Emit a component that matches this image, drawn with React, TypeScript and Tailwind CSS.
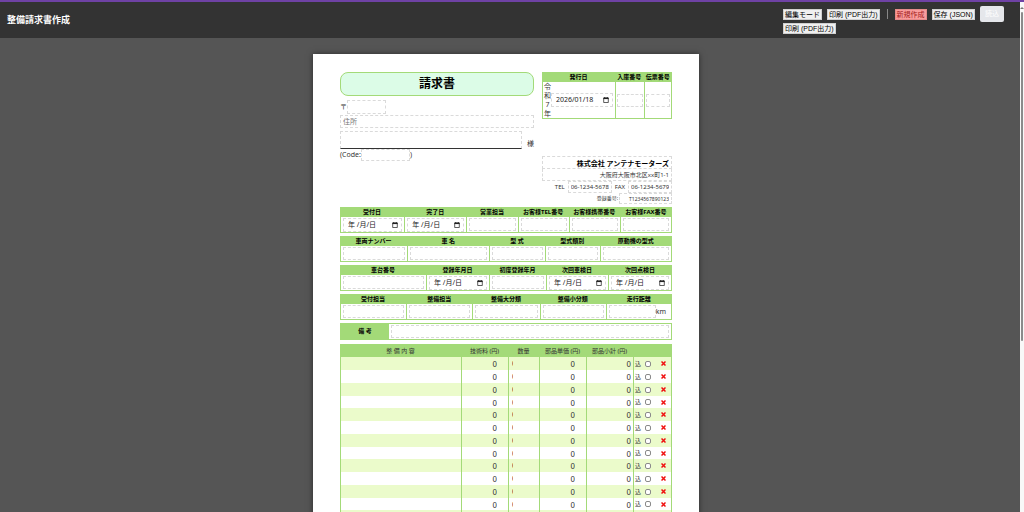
import React from "react";

type Field = {
  label: string;
  width: number;
  kind?: "date" | "text";
  suffix?: string;
};

const groups: Field[][] = [
  [
    { label: "受付日", width: 64, kind: "date" },
    { label: "完了日", width: 62, kind: "date" },
    { label: "営業担当", width: 51 },
    { label: "お客様TEL番号", width: 51 },
    { label: "お客様携帯番号", width: 51 },
    { label: "お客様FAX番号", width: 52 },
  ],
  [
    { label: "車両ナンバー", width: 67 },
    { label: "車 名", width: 82 },
    { label: "型 式", width: 55 },
    { label: "型式類別", width: 55 },
    { label: "原動機の型式", width: 72 },
  ],
  [
    { label: "車台番号", width: 86 },
    { label: "登録年月日", width: 63, kind: "date" },
    { label: "初度登録年月", width: 57 },
    { label: "次回車検日", width: 62, kind: "date" },
    { label: "次回点検日", width: 64, kind: "date" },
  ],
  [
    { label: "受付担当", width: 66 },
    { label: "整備担当", width: 66 },
    { label: "整備大分類", width: 67 },
    { label: "整備小分類", width: 66 },
    { label: "走行距離", width: 66, suffix: "km" },
  ],
];

const itemColumns = [
  { label: "整 備 内 容", width: 121 },
  { label: "技術料 (円)", width: 47 },
  { label: "数量", width: 31 },
  { label: "部品単価 (円)", width: 47 },
  { label: "部品小計 (円)", width: 47 },
  { label: "", width: 39 },
];

const rows = Array.from({ length: 13 }, (_, i) => i);

const dashed = "border border-dashed border-[#dadada] bg-transparent outline-none";

function CalendarIcon() {
  return (
    <svg viewBox="0 0 12 13" className="h-[6px] w-[6px] shrink-0" aria-hidden="true">
      <path d="M1 2h10v10H1z" fill="none" stroke="#222" strokeWidth="1.6" />
      <path d="M0.5 1.5h11v3h-11z" fill="#222" />
      <path d="M3 0v2M9 0v2" stroke="#222" strokeWidth="1.6" />
    </svg>
  );
}

function DateField({ label, value }: { label: string; value?: string }) {
  return (
    <div className={`flex h-[14px] w-full items-center pr-[3px] pl-[4px] ${dashed}`}>
      <input
        aria-label={label}
        defaultValue={value}
        placeholder="年 /月/日"
        className="w-0 min-w-0 flex-1 bg-transparent text-[7px] leading-[10px] text-[#222] outline-none placeholder:text-[#222]"
      />
      <CalendarIcon />
    </div>
  );
}

function ToolButton({ children, danger }: { children: React.ReactNode; danger?: boolean }) {
  return (
    <button
      type="button"
      className={
        "h-[11px] border px-px font-['Liberation_Sans','Noto_Sans_CJK_JP',sans-serif] text-[7px] leading-[9px] whitespace-nowrap " +
        (danger ? "border-[#e58a8a] bg-[#f99c9c] text-[#a32020]" : "border-[#d0d0d0] bg-[#f0f0f0] text-black")
      }
    >
      {children}
    </button>
  );
}

function FieldGroup({ fields }: { fields: Field[] }) {
  const total = fields.reduce((sum, f) => sum + f.width, 0);
  return (
    <table className="w-full table-fixed border-separate border-spacing-0">
      <colgroup>
        {fields.map((f) => (
          <col key={f.label} style={{ width: `${(f.width / total) * 100}%` }} />
        ))}
      </colgroup>
      <thead>
        <tr>
          {fields.map((f) => (
            <th key={f.label} className="h-[10px] bg-[#a3da78] p-0 text-[6px] leading-[10px] font-bold whitespace-nowrap">
              {f.label}
            </th>
          ))}
        </tr>
      </thead>
      <tbody>
        <tr>
          {fields.map((f) => (
            <td key={f.label} className="h-[16px] border-b border-l border-[#a3da78] px-[2px] py-0 align-middle last:border-r">
              {f.kind === "date" ? (
                <DateField label={f.label} />
              ) : (
                <div className="flex items-center">
                  <input aria-label={f.label} className={`h-[13px] w-0 min-w-0 flex-1 px-[2px] text-[7px] ${dashed}`} />
                  {f.suffix && <span className="pr-[3px] text-[7px] leading-[10px] text-[#333]">{f.suffix}</span>}
                </div>
              )}
            </td>
          ))}
        </tr>
      </tbody>
    </table>
  );
}

function Toolbar() {
  return (
    <header className="flex h-[36px] shrink-0 items-center justify-between bg-[#333] px-[7px]">
      <h1 className="text-[9px] leading-[12px] font-bold text-white">整備請求書作成</h1>
      <div className="flex w-[230px] flex-wrap items-center gap-x-[5px] gap-y-px">
        <ToolButton>編集モード</ToolButton>
        <ToolButton>印刷 (PDF出力)</ToolButton>
        <span className="mx-[2px] h-[10px] w-px bg-[#888]" />
        <ToolButton danger>新規作成</ToolButton>
        <ToolButton>保存 (JSON)</ToolButton>
        <button type="button" className="h-[16px] rounded-[2px] bg-[#e5e7eb] px-[5px] text-[7px] leading-[10px] text-white">
          読込
        </button>
        <ToolButton>印刷 (PDF出力)</ToolButton>
      </div>
    </header>
  );
}

function Customer() {
  return (
    <div className="min-w-0 flex-1 text-[7px] leading-[10px] text-[#333]">
      <h2 className="flex h-[24px] items-center justify-center rounded-[8px] border border-[#a3da78] bg-[#dcfce7] text-[12px] leading-[16px] font-bold text-black">
        請求書
      </h2>
      <label className="mt-[4px] flex items-center">
        〒
        <input className={`h-[14px] w-[39px] px-[2px] ${dashed}`} />
      </label>
      <input aria-label="住所" placeholder="住所" className={`mt-px block h-[13px] w-full px-[2px] placeholder:text-[#757575] ${dashed}`} />
      <label className="mt-[3px] flex items-end gap-[5px]">
        <input className={`h-[18px] min-w-0 flex-1 border-b-[#333] px-[2px] [border-bottom-style:solid] ${dashed}`} />
        様
      </label>
      <label className="flex items-center">
        <span>(Code:</span>
        <input className={`h-[12px] w-[49px] px-[2px] ${dashed}`} />)
      </label>
    </div>
  );
}

function Issuer() {
  const head = "h-[10px] bg-[#a3da78] p-0 text-[6px] leading-[10px] font-bold whitespace-nowrap";
  const cell = "h-[37px] border-b border-l border-[#a3da78] py-0 last:border-r";
  return (
    <div className="w-[130px] shrink-0 text-[#333]">
      <table className="w-full table-fixed border-separate border-spacing-0 text-black">
        <thead>
          <tr>
            <th className={`w-[73px] ${head}`}>発行日</th>
            <th className={head}>入庫番号</th>
            <th className={head}>伝票番号</th>
          </tr>
        </thead>
        <tbody>
          <tr>
            <td className={`pr-[2px] pl-px ${cell}`}>
              <div className="flex items-center">
                <span className="w-[7px] shrink-0 text-center text-[7px] leading-[9px] break-all text-[#333]">令和7年</span>
                <DateField label="発行日" value="2026/01/18" />
              </div>
            </td>
            <td className={`px-px ${cell}`}>
              <input aria-label="入庫番号" className={`block h-[13px] w-full ${dashed}`} />
            </td>
            <td className={`px-px ${cell}`}>
              <input aria-label="伝票番号" className={`block h-[13px] w-full ${dashed}`} />
            </td>
          </tr>
        </tbody>
      </table>
      <div className="mt-[37px] text-[6px] leading-[9px]">
        <input aria-label="会社名" defaultValue="株式会社 アンテナモーターズ" className={`block h-[13px] w-full px-[2px] text-right text-[7px] font-bold text-black ${dashed}`} />
        <input aria-label="会社住所" defaultValue="大阪府大阪市北区xx町1-1" className={`block h-[12px] w-full border-t-0 px-[2px] text-right ${dashed}`} />
        <div className="flex items-center justify-end gap-[3px]">
          <label className="flex items-center gap-[3px]">
            TEL
            <input defaultValue="06-1234-5678" className={`h-[12px] w-[44px] px-[2px] text-right ${dashed}`} />
          </label>
          <label className="flex items-center gap-[3px]">
            FAX
            <input defaultValue="06-1234-5679" className={`h-[12px] w-[44px] px-[2px] text-right ${dashed}`} />
          </label>
        </div>
        <label className="flex items-center justify-end gap-px text-[5px]">
          登録番号:
          <input defaultValue="T1234567890123" className={`h-[11px] w-[53px] px-[2px] text-right ${dashed}`} />
        </label>
      </div>
    </div>
  );
}

function Items() {
  const total = itemColumns.reduce((sum, c) => sum + c.width, 0);
  const cell = "border-l border-[#a3da78] p-0 align-middle";
  const num =
    "block w-full bg-transparent text-right font-['Noto_Sans_CJK_JP',sans-serif] text-[8px] leading-[11px] h-[11px] outline-none";
  return (
    <table className="mt-[4px] w-full table-fixed border-separate border-spacing-0 text-[#333]">
      <colgroup>
        {itemColumns.map((c, i) => (
          <col key={i} style={{ width: `${(c.width / total) * 100}%` }} />
        ))}
      </colgroup>
      <thead>
        <tr>
          {itemColumns.map((c, i) => (
            <th key={i} className="h-[13px] bg-[#a3da78] p-0 text-[6px] leading-[12px] font-normal whitespace-nowrap">
              {c.label}
            </th>
          ))}
        </tr>
      </thead>
      <tbody>
        {rows.map((r) => (
          <tr key={r} className="h-[13px] odd:bg-[#ebfbcb] nth-[4n]:h-[12px]">
            <td className={cell}>
              <input aria-label="整備内容" className="block h-[11px] w-full bg-transparent px-[2px] text-[7px] outline-none" />
            </td>
            <td className={cell}>
              <input aria-label="技術料" defaultValue="0" className={`pr-[11px] ${num}`} />
            </td>
            <td className={cell}>
              <input aria-label="数量" defaultValue="0" className="ml-[3px] block h-[11px] w-px bg-transparent text-[7px] leading-[11px] text-[#5c1a1a] outline-none" />
            </td>
            <td className={cell}>
              <input aria-label="部品単価" defaultValue="0" className={`pr-[11px] ${num}`} />
            </td>
            <td className={cell}>
              <input aria-label="部品小計" defaultValue="0" className={`pr-[2px] ${num}`} />
            </td>
            <td className={`border-r ${cell}`}>
              <div className="flex items-center justify-between pr-[4px] pl-px">
                <label className="flex items-center gap-[4px] text-[6px] leading-[10px]">
                  込
                  <input type="checkbox" className="h-[6px] w-[6px] appearance-none rounded-[2px] border border-[#8a8a8a] bg-white" />
                </label>
                <button type="button" aria-label="行を削除" className="flex h-[10px] w-[7px] items-center justify-center">
                  <svg viewBox="0 0 10 10" className="h-[5px] w-[5px]" aria-hidden="true">
                    <path d="M1 1l8 8M9 1l-8 8" stroke="#f01010" strokeWidth="3" />
                  </svg>
                </button>
              </div>
            </td>
          </tr>
        ))}
      </tbody>
    </table>
  );
}

export default function App() {
  return (
    <div className="flex h-screen flex-col overflow-hidden border-t-2 border-[#6f42a5] bg-[#555] font-['Noto_Sans','Noto_Sans_CJK_JP',sans-serif]">
      <div className="flex min-h-0 flex-1">
        <div className="flex min-w-0 flex-1 flex-col">
          <Toolbar />
          <div className="min-h-0 flex-1 overflow-hidden pt-[16px] pr-[8px]">
            <main className="mx-auto w-[386px] bg-white px-[27px] pt-[18px] pb-[27px] text-black shadow-[0_0_6px_rgba(0,0,0,0.5)]">
              <section className="flex gap-[8px]">
                <Customer />
                <Issuer />
              </section>
              <section className="mt-[3px] flex flex-col gap-[3px]">
                {groups.map((g) => (
                  <FieldGroup key={g[0].label} fields={g} />
                ))}
                <label className="flex h-[17px] border border-[#a3da78] text-[6px] font-bold">
                  <span className="flex w-[48px] items-center justify-center bg-[#a3da78]">備 考</span>
                  <span className="flex flex-1 items-center px-[2px]">
                    <input className={`h-[13px] w-full px-[2px] font-normal ${dashed}`} />
                  </span>
                </label>
              </section>
              <Items />
            </main>
          </div>
        </div>
        <div className="flex w-[4px] shrink-0 flex-col items-center bg-[#f8f8f8] pt-[4px]" aria-hidden="true">
          <svg viewBox="0 0 4 4" className="mb-[2px] h-[4px] w-[4px] shrink-0">
            <path d="M2 1L4 3H0z" fill="#777" />
          </svg>
          <div className="h-[65%] w-[2px] rounded-full bg-[#8b8b8b]" />
        </div>
      </div>
    </div>
  );
}
